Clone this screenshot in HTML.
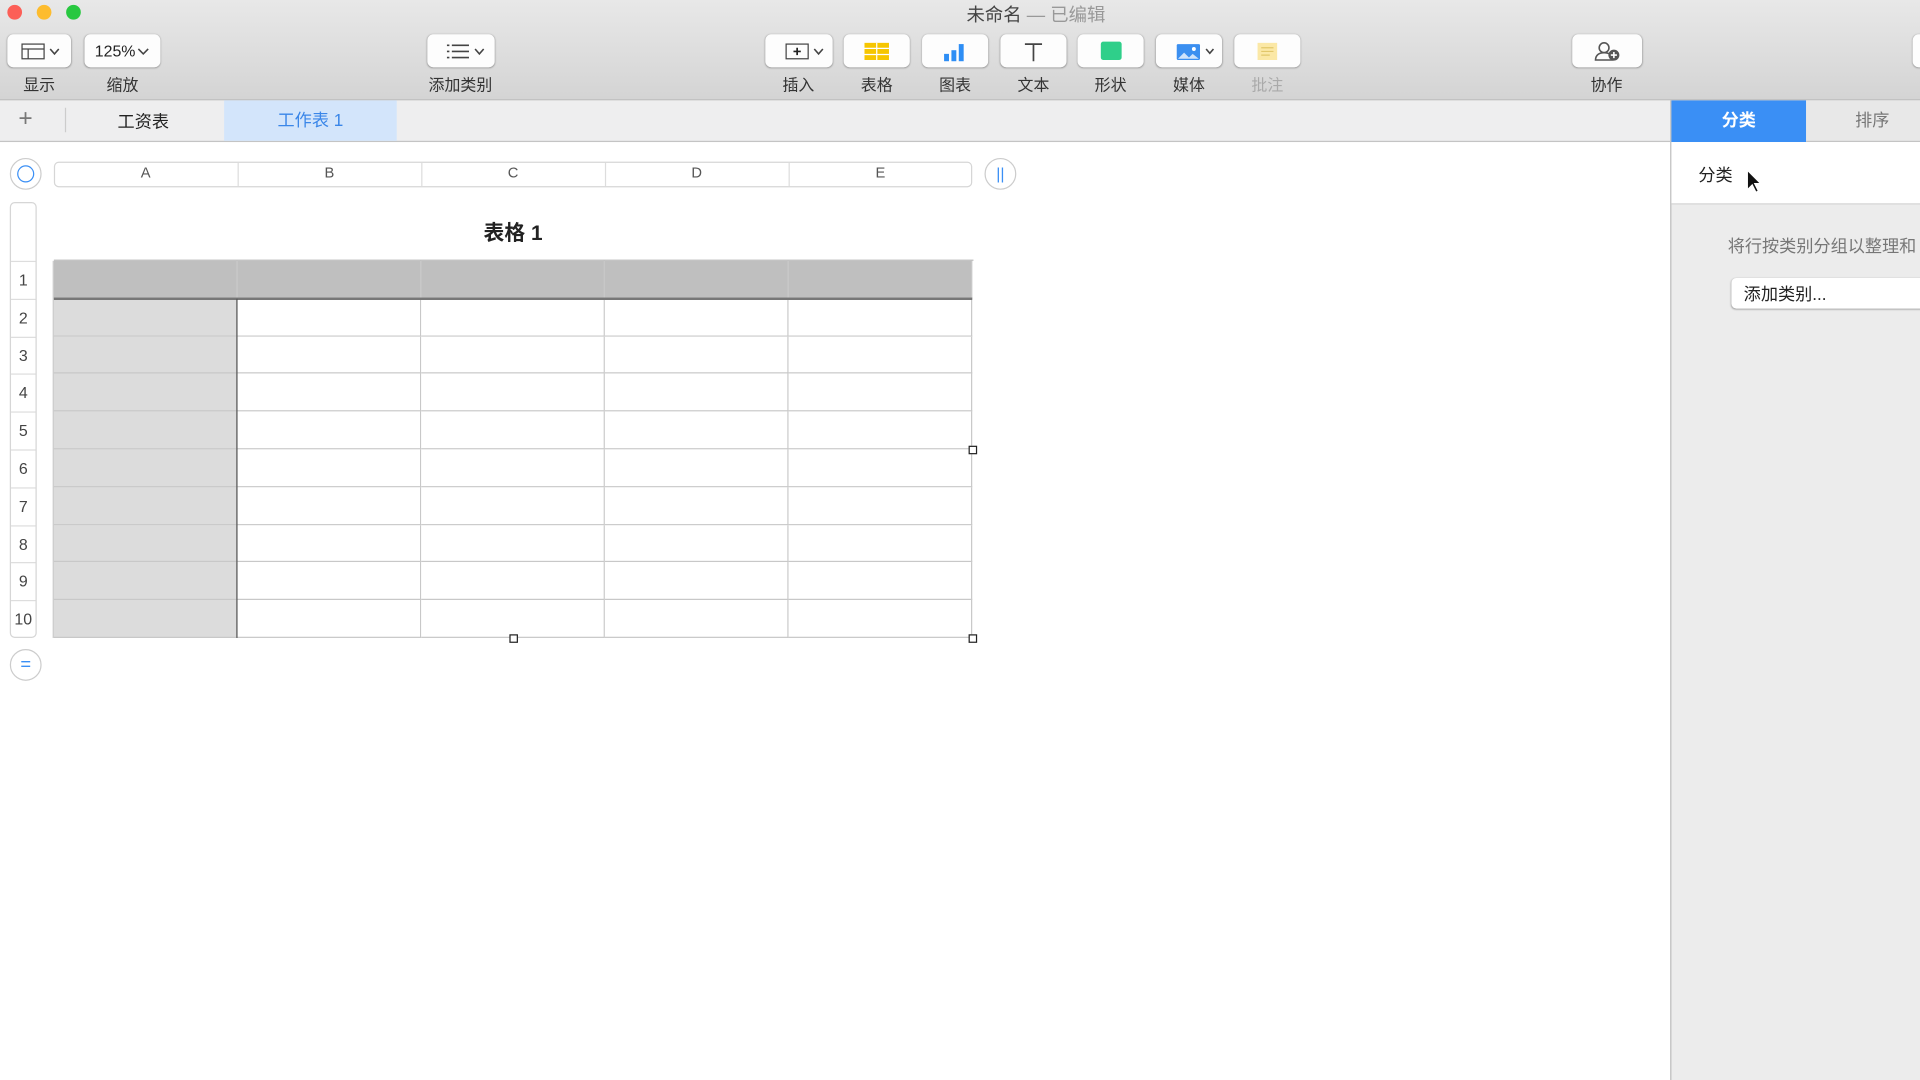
<!DOCTYPE html>
<html><head><meta charset="utf-8"><style>
*{margin:0;padding:0;box-sizing:border-box}
html,body{width:1920px;height:1080px;overflow:hidden;background:#fff}
#w{position:absolute;left:0;top:0;width:1568px;height:882px;transform:scale(1.22449);transform-origin:0 0;font-family:"Liberation Sans","Noto Sans CJK SC",sans-serif;color:#222}
.a{position:absolute}
.tb{left:0;top:0;width:1568px;height:82px;background:linear-gradient(#e8e8e8,#d4d4d4);border-bottom:1px solid #b9b9b9}
.btn{position:absolute;top:28px;height:27px;background:#fdfdfd;border-radius:5px;box-shadow:0 0.5px 1.5px rgba(0,0,0,.35);display:flex;align-items:center;justify-content:center;font-size:13px}
.lbl{position:absolute;top:59px;font-size:13px;color:#333;text-align:center;transform:translateX(-50%)}
.light{width:12px;height:12px;border-radius:50%;top:4px}
.cell{position:absolute;border-right:1px solid #c8c8c8;border-bottom:1px solid #c8c8c8}
</style></head><body><div id="w">
<div class="a tb"></div>
<div class="a light" style="left:6px;background:#fc5f57"></div>
<div class="a light" style="left:30px;background:#fdbc2e"></div>
<div class="a light" style="left:54px;background:#28c840"></div>
<div class="a" style="left:0;width:1568px;top:1px;text-align:center;font-size:15px;color:#444;padding-left:124px">未命名 <span style="color:#999">— 已编辑</span></div>

<div class="btn" style="left:6px;width:52px"><svg width="40" height="16"><rect x="6" y="2" width="18" height="12" fill="none" stroke="#444"/><line x1="6" y1="6" x2="24" y2="6" stroke="#444"/><line x1="11" y1="6" x2="11" y2="14" stroke="#444"/><path d="M29 6l3.5 4 3.5-4" fill="none" stroke="#444" stroke-width="1.3"/></svg></div>
<div class="btn" style="left:69px;width:62px">125%<svg width="12" height="10"><path d="M2 3l4 4 4-4" fill="none" stroke="#444" stroke-width="1.3"/></svg></div>
<div class="btn" style="left:349px;width:55px"><svg width="44" height="16"><g stroke="#444" stroke-width="1.3"><line x1="10" y1="3" x2="12" y2="3"/><line x1="14" y1="3" x2="28" y2="3"/><line x1="10" y1="8" x2="12" y2="8"/><line x1="14" y1="8" x2="28" y2="8"/><line x1="10" y1="13" x2="12" y2="13"/><line x1="14" y1="13" x2="28" y2="13"/></g><path d="M33 6l3.5 4 3.5-4" fill="none" stroke="#444" stroke-width="1.3"/></svg></div>
<div class="btn" style="left:625px;width:55px"><svg width="44" height="18"><rect x="11" y="3" width="18" height="12" fill="none" stroke="#444"/><path d="M20 6v6M17 9h6" stroke="#222" stroke-width="1.4"/><path d="M34 7l3.5 4 3.5-4" fill="none" stroke="#444" stroke-width="1.3"/></svg></div>
<div class="btn" style="left:689px;width:54px"><svg width="22" height="16"><rect x="1" y="1" width="20" height="14" fill="#f6c600"/><path d="M1 5.5h20M1 10.5h20M11 1v14" stroke="#fff" stroke-width="1"/></svg></div>
<div class="btn" style="left:753px;width:54px"><svg width="24" height="18"><rect x="3" y="11" width="4" height="6" fill="#2e8ef5"/><rect x="9" y="8" width="4" height="9" fill="#2e8ef5"/><rect x="15" y="3" width="4" height="14" fill="#2e8ef5"/></svg></div>
<div class="btn" style="left:817px;width:54px"><svg width="20" height="18"><path d="M3 3h14M10 3v14" stroke="#444" stroke-width="1.4"/></svg></div>
<div class="btn" style="left:880px;width:54px"><div style="width:17px;height:15px;background:#2fcf8a;border-radius:2px"></div></div>
<div class="btn" style="left:944px;width:54px"><svg width="44" height="18"><rect x="12" y="3" width="19" height="13" fill="#3b8ff0" rx="1"/><path d="M13 15l5-5 4 4 3-3 5 4z" fill="#cfe3fb"/><circle cx="26" cy="7" r="1.6" fill="#fff"/><path d="M36 7l3 3.5 3-3.5" fill="none" stroke="#444" stroke-width="1.3"/></svg></div>
<div class="btn" style="left:1008px;width:54px"><svg width="20" height="18"><rect x="2" y="2" width="16" height="14" fill="#fbe8a6"/><path d="M5 6h10M5 9h10M5 12h7" stroke="#e2c76a"/></svg></div>
<div class="btn" style="left:1284px;width:57px"><svg width="28" height="20"><circle cx="11" cy="7" r="4" fill="none" stroke="#555" stroke-width="1.3"/><path d="M4 17c0-4 3-6 7-6s7 2 7 6z" fill="none" stroke="#555" stroke-width="1.3"/><circle cx="19" cy="13" r="4.5" fill="#555"/><path d="M19 10.5v5M16.5 13h5" stroke="#fff" stroke-width="1.3"/></svg></div>
<div class="btn" style="left:1562px;width:20px"></div>

<div class="lbl" style="left:32px">显示</div>
<div class="lbl" style="left:100px">缩放</div>
<div class="lbl" style="left:376px">添加类别</div>
<div class="lbl" style="left:652px">插入</div>
<div class="lbl" style="left:716px">表格</div>
<div class="lbl" style="left:780px">图表</div>
<div class="lbl" style="left:844px">文本</div>
<div class="lbl" style="left:907px">形状</div>
<div class="lbl" style="left:971px">媒体</div>
<div class="lbl" style="left:1035px;color:#aaa">批注</div>
<div class="lbl" style="left:1312px">协作</div>

<div class="a" style="left:0;top:82px;width:1364px;height:34px;background:#eeeeef;border-bottom:1px solid #c4c4c4"></div>
<div class="a" style="left:15px;top:86px;font-size:20px;color:#777;font-weight:300">+</div>
<div class="a" style="left:53px;top:88px;width:1px;height:20px;background:#ccc"></div>
<div class="a" style="left:96px;top:89px;font-size:14px">工资表</div>
<div class="a" style="left:183px;top:82px;width:141px;height:33px;background:#d3e5fb;color:#3a86e8;font-size:14px;text-align:center;line-height:32px">工作表 1</div>

<div class="a" style="left:1364px;top:82px;width:204px;height:800px;background:#ececec;border-left:1px solid #bdbdbd"></div>
<div class="a" style="left:1365px;top:82px;width:110px;height:34px;background:#3a8ff5;color:#fff;font-size:14px;font-weight:bold;text-align:center;line-height:32px">分类</div>
<div class="a" style="left:1475px;top:82px;width:108px;height:34px;background:#e8e8e8;color:#777;font-size:14px;text-align:center;line-height:32px;border-bottom:1px solid #c4c4c4">排序</div>
<div class="a" style="left:1365px;top:116px;width:203px;height:51px;background:#fff;border-bottom:1px solid #d4d4d4"></div>
<div class="a" style="left:1387px;top:133px;font-size:14px">分类</div>
<svg class="a" style="left:1425px;top:138px" width="14" height="22"><path d="M2 1v16l4-4 3 6 2-1-3-6h5z" fill="#111" stroke="#fff" stroke-width="1"/></svg>
<div class="a" style="left:1411px;top:191px;font-size:14px;color:#777;white-space:nowrap">将行按类别分组以整理和</div>
<div class="a" style="left:1414px;top:227px;width:170px;height:25px;background:#fff;border-radius:4px;box-shadow:0 0.5px 1.5px rgba(0,0,0,.35);font-size:14px;padding:3px 10px">添加类别...</div>

<div class="a" style="left:8px;top:129px;width:26px;height:26px;border-radius:50%;border:1px solid #ccc;background:#fff"></div>
<div class="a" style="left:14px;top:135px;width:14px;height:14px;border-radius:50%;border:1.5px solid #3a8ff5"></div>
<div class="a" style="left:44px;top:132px;width:750px;height:21px;border:1px solid #d6d6d6;border-radius:4px;background:#fff"></div>
<div class="a" style="left:804px;top:129px;width:26px;height:26px;border-radius:50%;border:1px solid #ccc;color:#3a8ff5;text-align:center;font-size:13px;line-height:24px">||</div>
<div class="a" style="left:8px;top:165px;width:22px;height:356px;border:1px solid #d6d6d6;border-radius:4px;background:#fff"></div>
<div class="a" style="left:8px;top:530px;width:26px;height:26px;border-radius:50%;border:1px solid #ccc;color:#3a8ff5;text-align:center;font-size:15px;line-height:23px">=</div>
<div class="a" style="left:44px;top:176px;width:750px;text-align:center;font-size:17px;font-weight:bold">表格 1</div>

<div id="grid"></div>
<script>
var h='',xs=[44,194,344,494,644,794],L='ABCDE';
for(var i=0;i<5;i++){h+='<div class="a" style="left:'+xs[i]+'px;top:134px;width:150px;text-align:center;font-size:12px;color:#555">'+L[i]+'</div>';if(i>0)h+='<div class="a" style="left:'+xs[i]+'px;top:133px;width:1px;height:19px;background:#ddd"></div>';}
var ys=[213];for(var r=1;r<=10;r++)ys.push(213+r*30.8);
for(var r=0;r<10;r++){var y=ys[r],hh=ys[r+1]-ys[r];
h+='<div class="a" style="left:9px;top:'+y+'px;width:20px;height:'+hh+'px;border-top:1px solid #ddd;text-align:center;font-size:13px;color:#444;line-height:'+hh+'px">'+(r+1)+'</div>';
for(var c=0;c<5;c++){var bg=r==0?'#bfbfbf':(c==0?'#dcdcdc':'#fff');h+='<div class="cell" style="left:'+xs[c]+'px;top:'+y+'px;width:150px;height:'+hh+'px;background:'+bg+'"></div>';}}
h+='<div class="a" style="left:44px;top:212px;width:751px;height:1px;background:#bbb"></div>';
h+='<div class="a" style="left:43px;top:213px;width:1px;height:308px;background:#c8c8c8"></div>';
h+='<div class="a" style="left:44px;top:243px;width:750px;height:1.5px;background:#777"></div>';
h+='<div class="a" style="left:193px;top:244px;width:1px;height:277px;background:#555"></div>';
[[794,367],[419,521],[794,521]].forEach(function(p){h+='<div class="a" style="left:'+(p[0]-3.5)+'px;top:'+(p[1]-3.5)+'px;width:7px;height:7px;border:1px solid #222;background:#fff"></div>'});
document.getElementById('grid').innerHTML=h;
</script>
</div></body></html>
